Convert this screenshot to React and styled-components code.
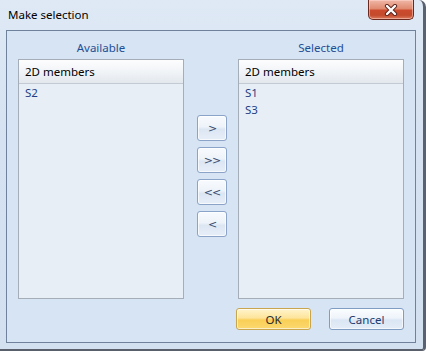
import React from "react";
import styled, { createGlobalStyle } from "styled-components";

const Global = createGlobalStyle`
  html, body { margin: 0; padding: 0; background: #ffffff; }
  * { box-sizing: border-box; }
`;

const FONT = `"Segoe UI", "Noto Sans", "Open Sans", sans-serif`;

const Window = styled.div`
  width: 426px;
  height: 351px;
  background: linear-gradient(180deg, #dfe9f6 0%, #d6e2f1 40%, #d3e0ef 100%);
  border-right: 3px solid #5a6270;
  border-bottom: 2px solid #59606b;
  border-top-right-radius: 7px;
  border-bottom-right-radius: 4px;
  font-family: ${FONT};
  display: flex;
  flex-direction: column;
`;

const TitleBar = styled.div`
  height: 30px;
  display: flex;
  align-items: flex-start;
  justify-content: space-between;
  padding-left: 8px;
  padding-right: 9px;
`;

const Title = styled.div`
  font-size: 11.5px;
  color: #000;
  line-height: 16px;
  padding-top: 7px;
`;

const CloseBtn = styled.div`
  width: 46px;
  height: 20px;
  border: 1px solid #6b2a1f;
  border-top: none;
  border-radius: 0 0 5px 5px;
  background: linear-gradient(180deg, #f0b8a8 0%, #e08a70 45%, #cc4a2e 55%, #c44a2c 80%, #dc7a5c 100%);
  box-shadow: inset 0 0 0 1px rgba(255, 220, 210, 0.5);
  display: flex;
  align-items: center;
  justify-content: center;
`;

const Client = styled.div`
  margin-left: 6px;
  width: 410px;
  height: 313px;
  border: 1px solid #6f819b;
  background: #d6e4f3;
  padding: 0 11px 12px 11px;
  display: grid;
  grid-template-columns: 166px 13px 30px 11px 166px;
  grid-template-rows: 28px 240px 9px 22px;
`;

const ColLabel = styled.div`
  grid-column: ${(p) => p.col};
  grid-row: 1;
  text-align: center;
  font-size: 11.5px;
  color: #1f4f96;
  line-height: 16px;
  padding-top: 9px;
`;

const List = styled.div`
  grid-column: ${(p) => p.col};
  grid-row: 2;
  border: 1px solid #a4adb8;
  background: #e8eef6;
  display: flex;
  flex-direction: column;
`;

const ListHeader = styled.div`
  height: 24px;
  background: linear-gradient(180deg, #fdfdfe 0%, #f1f4f7 50%, #e3e8ee 100%);
  border-bottom: 1px solid #c3cad3;
  font-size: 11.5px;
  color: #000;
  padding-left: 6px;
  display: flex;
  align-items: center;
`;

const Item = styled.div`
  height: 17px;
  font-size: 11.5px;
  color: #1d3f86;
  padding-left: 6px;
  display: flex;
  align-items: center;
`;

const MoveColumn = styled.div`
  grid-column: 3;
  grid-row: 2;
  padding-top: 56px;
  display: flex;
  flex-direction: column;
  gap: 6px;
`;

const MoveBtn = styled.button`
  width: 30px;
  height: 26px;
  padding: 0;
  border: 1px solid #8aa3c6;
  border-radius: 3px;
  background: linear-gradient(180deg, #f8fbfe 0%, #eef3fa 45%, #dce6f3 55%, #e6eef8 100%);
  box-shadow: inset 0 0 0 1px rgba(255, 255, 255, 0.7);
  font-family: "DejaVu Sans", sans-serif;
  font-size: 11px;
  color: #3a4d6e;
  line-height: 1;
  letter-spacing: -1px;
  display: flex;
  align-items: center;
  justify-content: center;
`;

const Footer = styled.div`
  grid-column: 1 / 6;
  grid-row: 4;
  display: flex;
  justify-content: flex-end;
  gap: 18px;
`;

const DlgBtn = styled.button`
  width: 75px;
  height: 22px;
  padding: 0;
  border: 1px solid ${(p) => (p.primary ? "#c9a64e" : "#7f9cc2")};
  border-radius: 3px;
  background: ${(p) =>
    p.primary
      ? "linear-gradient(180deg, #fff4cc 0%, #fde49a 45%, #f9cf56 55%, #fbd870 100%)"
      : "linear-gradient(180deg, #fbfdff 0%, #eef4fb 45%, #dbe6f4 55%, #e4edf8 100%)"};
  box-shadow: inset 0 0 0 1px rgba(255, 255, 255, 0.6);
  font-family: ${FONT};
  font-size: 11.5px;
  color: ${(p) => (p.primary ? "#2a2a2a" : "#1d3b6e")};
  display: flex;
  align-items: center;
  justify-content: center;
`;

export default function App() {
  return (
    <>
      <Global />
      <Window>
        <TitleBar>
          <Title>Make selection</Title>
          <CloseBtn>
            <svg width="14" height="12" viewBox="0 0 14 12">
              <path d="M3 2 L11 10 M11 2 L3 10" stroke="#5a231a" strokeWidth="4.2" strokeLinecap="round" />
              <path d="M3 2 L11 10 M11 2 L3 10" stroke="#ffffff" strokeWidth="2.4" strokeLinecap="round" />
            </svg>
          </CloseBtn>
        </TitleBar>
        <Client>
          <ColLabel col={1}>Available</ColLabel>
          <ColLabel col={5}>Selected</ColLabel>
          <List col={1}>
            <ListHeader>2D members</ListHeader>
            <Item>S2</Item>
          </List>
          <MoveColumn>
            <MoveBtn>&gt;</MoveBtn>
            <MoveBtn>&gt;&gt;</MoveBtn>
            <MoveBtn>&lt;&lt;</MoveBtn>
            <MoveBtn>&lt;</MoveBtn>
          </MoveColumn>
          <List col={5}>
            <ListHeader>2D members</ListHeader>
            <Item>S1</Item>
            <Item>S3</Item>
          </List>
          <Footer>
            <DlgBtn primary>OK</DlgBtn>
            <DlgBtn>Cancel</DlgBtn>
          </Footer>
        </Client>
      </Window>
    </>
  );
}
